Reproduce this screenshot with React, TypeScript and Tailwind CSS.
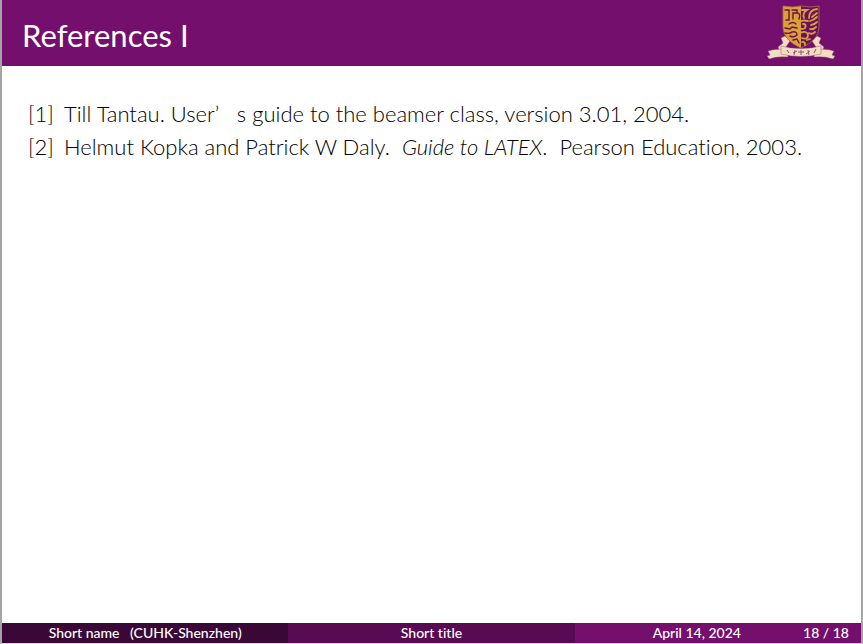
import React from "react";

function Crest() {
  return (
    <svg viewBox="0 0 68 56" className="h-14 w-[68px]" role="img" aria-label="University crest">
      <g fill="#f3dcc0" stroke="#8b3f70" strokeWidth=".4">
        <path d="M18 31 L23 36 L19 42 L23 46 L13 47 L11 42 L16 38 L14 33z" />
        <path d="M50 31 L45 36 L49 42 L45 46 L55 47 L57 42 L52 38 L54 33z" />
        <path d="M1 46 Q9 43 20 45 L21 52 Q10 51 2 54 L0 51 L3 50z" />
        <path d="M67 46 Q59 43 48 45 L47 52 Q58 51 66 54 L68 51 L65 50z" />
        <path d="M14 41 Q34 46 54 41 L54 49 Q34 54 14 49z" />
      </g>
      <path d="M16 1 Q26 3 34 1 V43 Q16 35 16 22z" fill="#dca039" />
      <path d="M34 1 Q43 3 52 1 V22 Q52 35 34 43z" fill="#69105f" />
      <path d="M16 1 Q26 3 34 1 Q43 3 52 1 V22 Q52 35 34 43 Q16 35 16 22z" fill="none" stroke="#ad7448" strokeWidth=".8" />
      <g fill="none" stroke="#681248" strokeWidth="1.4" strokeLinecap="round">
        <path d="M18 5h4v10h-3M25 5h5v3h-4v6M30 8q4 0 2 6M22 19q4-3 7 0M18 23l5 1 2-2 5 1M18 28q5 1 7-1q5-1 5 3q-3 3-7 1M26 35l4-1 2 4" />
      </g>
      <g fill="none" stroke="#dca039" strokeWidth="1.8" strokeLinecap="round">
        <path d="M35 5h5q-5 3-3 8M50 4q-8 1-8 9M50 8l-5 4M50 12q-3 3-7 4M50 17q-3 3-6 3M49 22q-3 3-6 2M48 27q-3 3-6 1M41 16q-9-2-9 4q1 6 6 3q2-4-2-4M33 28q7-3 8 2q0 5-6 3M43 34l-3 1M35 37q3-1 3 3" />
      </g>
      <path d="M20 45l2 3M28 45l-1 5m3-4l-4 2M34 45v5m-3-3h6M41 45l1 5m-3-1l4-3M49 44l-2 4" fill="none" stroke="#8b5777" />
    </svg>
  );
}

export default function App() {
  return (
    <div className="flex min-h-screen flex-col border-x-2 border-b border-[#a5a5a5] border-b-[#ddd3dd] bg-white font-['Lato','Open_Sans',sans-serif] [font-variant-ligatures:none]">
      <header className="flex h-[66px] items-center justify-between bg-[#750f6d] pr-[26px] pl-5 text-white">
        <h1 className="pt-1 text-[31px] leading-10">References I</h1>
        <Crest />
      </header>
      <main className="grow px-[26px] pt-[31px] text-[22px] leading-[33px] font-light whitespace-nowrap text-black">
        <ol>
          <li className="flex gap-3">
            <span className="w-6">[1]</span>
            <span>Till Tantau. User’&nbsp;&nbsp; s guide to the beamer class, version 3.01, 2004.</span>
          </li>
          <li className="flex gap-3">
            <span className="w-6">[2]</span>
            <span>Helmut Kopka and Patrick W Daly.&nbsp; <em>Guide to LATEX</em>.&nbsp; Pearson Education, 2003.</span>
          </li>
        </ol>
      </main>
      <footer className="grid h-5 grid-cols-3 text-center text-sm leading-5 font-medium whitespace-pre text-white">
        <div className="bg-[#3a0837]">Short name   (CUHK-Shenzhen)</div>
        <div className="bg-[#580b52]">Short title</div>
        <div className="flex justify-between bg-[#750f6d] pr-3 pl-[78px]">
          <span>April 14, 2024</span>
          <span>18 / 18</span>
        </div>
      </footer>
    </div>
  );
}
